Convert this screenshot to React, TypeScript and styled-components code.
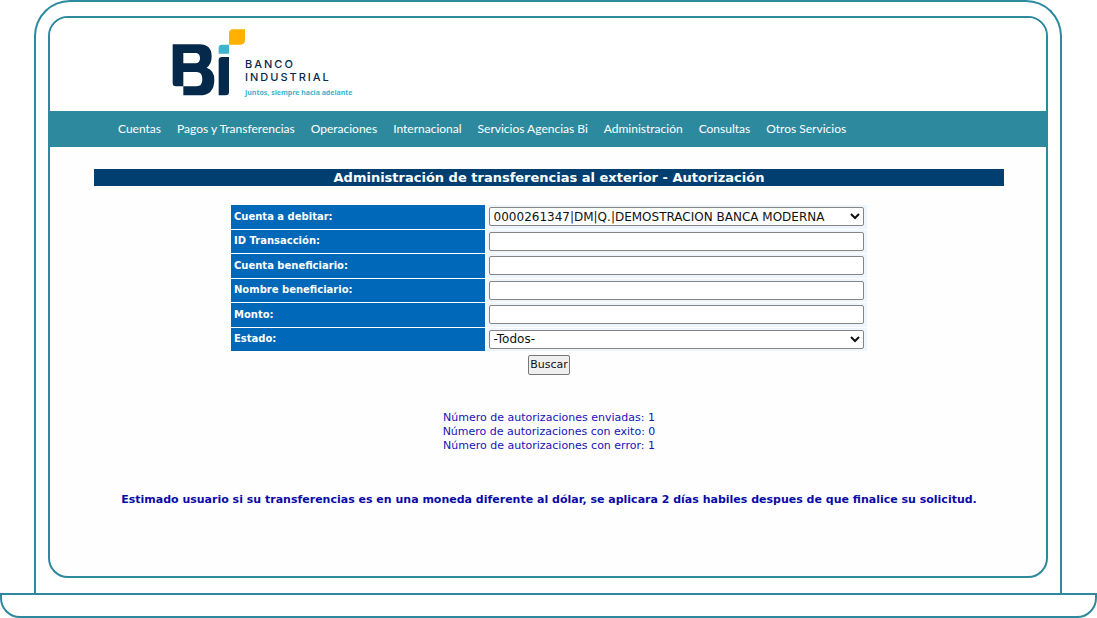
import React from "react";
import styled, { createGlobalStyle } from "styled-components";

const teal = "#2d8a9e";
const verdana = `Verdana, "DejaVu Sans", sans-serif`;

const GlobalStyle = createGlobalStyle`
  *, *::before, *::after { box-sizing: border-box; }
  body { margin: 0; background: #fff; font-family: ${verdana}; }
`;

const Laptop = styled.div`
  display: flex;
  flex-direction: column;
  min-height: 100vh;
`;

const Lid = styled.div`
  flex: 1;
  display: flex;
  margin: 0 35px 0 34px;
  padding: 14px 12px 15px;
  border: 2px solid ${teal};
  border-bottom: 0;
  border-radius: 36px 36px 0 0;
`;

const Screen = styled.div`
  flex: 1;
  border: 2px solid ${teal};
  border-radius: 20px;
  overflow: hidden;
  background: #fefefe;
`;

const Base = styled.div`
  height: 25px;
  border: 2px solid ${teal};
  border-radius: 0 0 20px 20px;
`;

const Header = styled.header`
  display: flex;
  align-items: flex-start;
  height: 93px;
  padding: 11px 0 0 122px;
  background: #fff;
`;

const Brand = styled.div`
  display: flex;
  flex-direction: column;
  padding-top: 29px;
  color: #05294b;
  font: 500 11px/13px Inter, sans-serif;
  letter-spacing: 2px;
`;

const Slogan = styled.span`
  margin-top: 4px;
  color: #3fb4cc;
  font: 700 7px/10px "Noto Sans", sans-serif;
  letter-spacing: 0;
`;

const Nav = styled.nav`
  display: flex;
  align-items: center;
  gap: 16px;
  height: 36px;
  padding-left: 68px;
  background: ${teal};
`;

const NavLink = styled.a`
  color: #fff;
  font: 400 12px/16px Lato, sans-serif;
  text-decoration: none;
  white-space: nowrap;
`;

const Main = styled.main`
  display: flex;
  flex-direction: column;
  align-items: center;
  padding: 22px 42px 0 44px;
`;

const Title = styled.h1`
  align-self: stretch;
  margin: 0 0 18px;
  background: #003f70;
  color: #fff;
  font: 700 13px/17px ${verdana};
  text-align: center;
`;

const Form = styled.form`
  display: flex;
  flex-direction: column;
  align-items: center;
  width: 100%;
  max-width: 640px;
`;

const Fields = styled.table`
  width: 100%;
  height: 148px;
  border-spacing: 2px 1px;
  table-layout: fixed;
`;

const LabelCell = styled.th`
  width: 40%;
  padding: 0 3px;
  background: #0068b8;
  color: #fff;
  font: 700 10px/14px ${verdana};
  text-align: left;
`;

const ControlCell = styled.td`
  padding: 0 3px 0 2px;
  background: #eff5fd;
`;

const control = `
  display: block;
  width: 100%;
  height: 19px;
  border: 1px solid #858585;
  border-radius: 2px;
  background: #fff;
  color: #111;
  font: 400 12px/16px ${verdana};
`;

const TextBox = styled.input`
  ${control}
  padding: 0 4px;
`;

const DropDown = styled.select`
  ${control}
  padding: 0;
`;

const SearchButton = styled.button`
  height: 20px;
  margin-top: 3px;
  padding: 0 1px;
  border: 1px solid #777;
  border-radius: 2px;
  background: #efefef;
  color: #111;
  font: 400 11px/16px ${verdana};
`;

const Summary = styled.p`
  margin: 36px 0 0;
  color: #1414b8;
  font: 400 11px/14px ${verdana};
  text-align: center;
`;

const Notice = styled.p`
  margin: 39px 0 0;
  color: #0a0aa8;
  font: 700 11px/16px ${verdana};
  text-align: center;
`;

const menu = [
  "Cuentas",
  "Pagos y Transferencias",
  "Operaciones",
  "Internacional",
  "Servicios Agencias Bi",
  "Administración",
  "Consultas",
  "Otros Servicios",
];

const fields = [
  { id: "cuenta", label: "Cuenta a debitar:", options: ["0000261347|DM|Q.|DEMOSTRACION BANCA MODERNA"] },
  { id: "transaccion", label: "ID Transacción:" },
  { id: "cuenta-beneficiario", label: "Cuenta beneficiario:" },
  { id: "nombre-beneficiario", label: "Nombre beneficiario:" },
  { id: "monto", label: "Monto:" },
  { id: "estado", label: "Estado:", options: ["-Todos-"] },
];

const Logo = () => (
  <svg width="73" height="68" viewBox="0 0 219 204" aria-hidden="true">
    <path
      fill="#05294b"
      fillRule="evenodd"
      d="M2 46H82Q119 46 119 82Q119 106 104 116Q127 124 127 152Q127 199 82 199H34V172H12Q2 172 2 162ZM34 72V103H70Q84 103 84 88Q84 72 70 72ZM34 129V172H74Q91 172 91 151Q91 129 74 129Z"
    />
    <path fill="#05294b" d="M140 94Q140 84 150 84H171V189Q171 199 161 199H140Z" />
    <path fill="#3fb4cc" d="M149 47H171V74H140V56Q140 47 149 47Z" />
    <path fill="#ffb000" d="M184 1H219V33Q219 47 205 47H171V14Q171 1 184 1Z" />
  </svg>
);

export default function App() {
  return (
    <>
      <GlobalStyle />
      <Laptop>
        <Lid>
          <Screen>
            <Header>
              <Logo />
              <Brand>
                <span>BANCO</span>
                <span>INDUSTRIAL</span>
                <Slogan>Juntos, siempre hacia adelante</Slogan>
              </Brand>
            </Header>
            <Nav>
              {menu.map((item) => (
                <NavLink href="#" key={item}>{item}</NavLink>
              ))}
            </Nav>
            <Main>
              <Title>Administración de transferencias al exterior - Autorización</Title>
              <Form onSubmit={(event) => event.preventDefault()}>
                <Fields>
                  <tbody>
                    {fields.map(({ id, label, options }) => (
                      <tr key={id}>
                        <LabelCell scope="row"><label htmlFor={id}>{label}</label></LabelCell>
                        <ControlCell>
                          {options ? (
                            <DropDown id={id}>
                              {options.map((option) => <option key={option}>{option}</option>)}
                            </DropDown>
                          ) : (
                            <TextBox id={id} type="text" />
                          )}
                        </ControlCell>
                      </tr>
                    ))}
                  </tbody>
                </Fields>
                <SearchButton type="submit">Buscar</SearchButton>
              </Form>
              <Summary>
                Número de autorizaciones enviadas: 1<br />
                Número de autorizaciones con exito: 0<br />
                Número de autorizaciones con error: 1
              </Summary>
              <Notice>
                Estimado usuario si su transferencias es en una moneda diferente al dólar, se aplicara 2 días habiles despues de que finalice su solicitud.
              </Notice>
            </Main>
          </Screen>
        </Lid>
        <Base />
      </Laptop>
    </>
  );
}
